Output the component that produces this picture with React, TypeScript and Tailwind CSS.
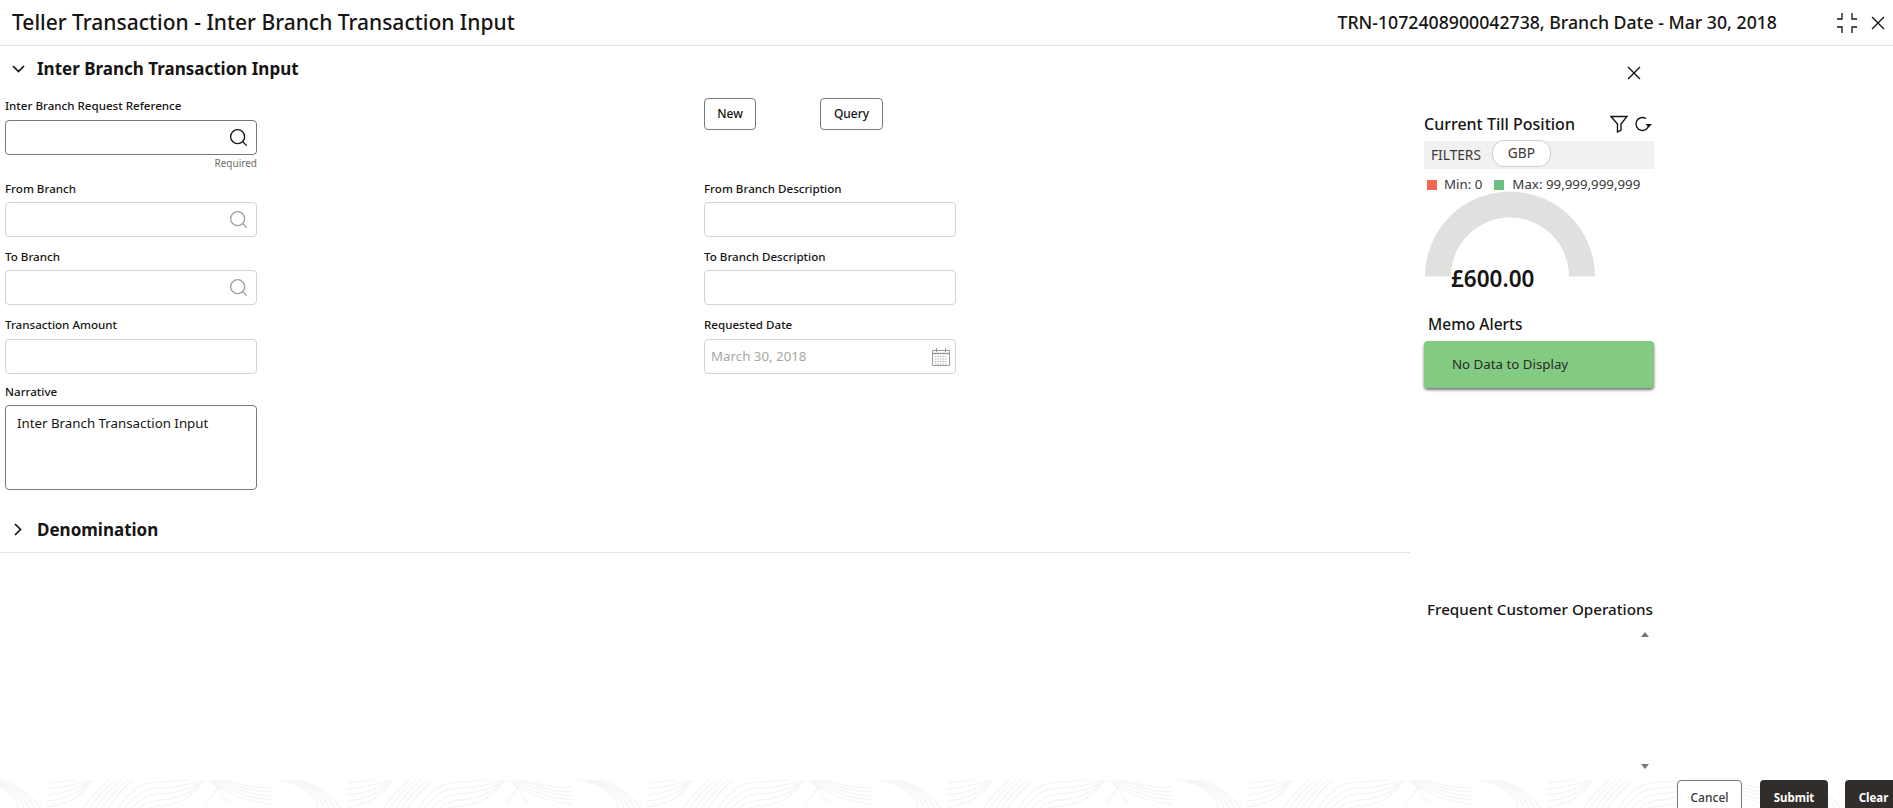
import { useState } from 'react'
import { Search } from 'lucide-react'

const font = "font-['Noto_Sans',sans-serif]"

function Label({ children }: { children: string }) {
  return <label className="block h-[18px] text-[11.6px] font-medium leading-[18px] text-[#161513]">{children}</label>
}

function TextBox({ icon, strong, value }: { icon?: boolean; strong?: boolean; value?: string }) {
  return (
    <div
      className={`mt-1 flex h-[35px] w-[252px] items-center rounded-[4px] border bg-white pr-1.5 ${
        strong ? 'border-[#7a7875]' : 'border-[#d4d3d2]'
      }`}
    >
      <input
        readOnly
        value={value ?? ''}
        className="h-full min-w-0 flex-1 bg-transparent pl-1.5 text-[13.3px] text-[#a8a6a3] outline-none"
      />
      {icon && <Search size={21} strokeWidth={1.5} className={`mr-[1px] ${strong ? 'text-[#161513]' : 'text-[#a3a19e]'}`} />}
    </div>
  )
}

function CloseIcon({ size = 14 }: { size?: number }) {
  return (
    <svg width={size} height={size} viewBox="0 0 14 14" fill="none" stroke="#161513" strokeWidth="1.4">
      <path d="M1 1l12 12M13 1L1 13" />
    </svg>
  )
}

function CompressIcon() {
  return (
    <svg width="20" height="20" viewBox="0 0 20 20" fill="none" stroke="#161513" strokeWidth="1.3">
      <path d="M0 6h5V0M15 0v6h5M0 14h5v6M15 20v-6h5" />
    </svg>
  )
}

function CalendarIcon() {
  return (
    <svg width="20" height="20" viewBox="0 0 20 20" fill="none" stroke="#9b9996">
      <path d="M1.5 3.5h17v15h-17z" />
      <path d="M1.5 6.5h17" strokeWidth="1.5" />
      <path d="M5.5 1v4M14.5 1v4" />
      <path d="M4 9.5h12M4 12h12M4 14.5h12M4 17h12" strokeDasharray="1.5 1" stroke="#b5b3b0" />
    </svg>
  )
}

// footer wave texture, one tile is 300px wide
function FooterPattern() {
  const offsets = [0, 6, 12, 18, 24]
  return (
    <svg className="absolute inset-0 h-full w-full" aria-hidden>
      <defs>
        <pattern id="waves" width="300" height="28" patternUnits="userSpaceOnUse">
          <g fill="none" stroke="#f5f5f4" strokeWidth="1.3">
            {offsets.map((o) => (
              <path key={`a${o}`} d={`M${-30 + o} -2 Q${18 + o * 0.3} 6 ${18 + o} 30`} />
            ))}
            {offsets.map((o) => (
              <path key={`a2${o}`} d={`M${270 + o} -2 Q${318 + o * 0.3} 6 ${318 + o} 30`} />
            ))}
            {offsets.map((o) => (
              <path key={`b${o}`} d={`M47 ${o + 3} Q78 ${o} ${98 - o * 0.2} ${-4 + o * 0.1}`} />
            ))}
            {offsets.map((o) => (
              <path key={`c${o}`} d={`M${82 + o} 30 Q${96 + o} 10 ${112 + o} -2`} />
            ))}
            {offsets.map((o) => (
              <path key={`d${o}`} d={`M${118 + o} 30 Q${132 + o} ${o + 2} 160 ${o + 2}`} />
            ))}
            {offsets.map((o) => (
              <path key={`e${o}`} d={`M160 ${o + 2} Q190 ${o} ${210 - o * 0.2} -2`} />
            ))}
            {offsets.map((o) => (
              <path key={`f${o}`} d={`M${206 + o * 0.5} -2 Q${232 + o} ${20 - o * 0.4} 272 ${24 - o * 0.7}`} />
            ))}
            <path d="M224 -2L206 24M212 -2L228 24" />
          </g>
        </pattern>
      </defs>
      <rect width="100%" height="100%" fill="url(#waves)" />
    </svg>
  )
}

export default function App() {
  const [narrative] = useState('Inter Branch Transaction Input')

  return (
    <div className={`${font} flex h-[808px] w-[1893px] flex-col overflow-hidden bg-white text-[#161513]`}>
      {/* Title bar */}
      <header className="flex h-[46px] shrink-0 items-center border-b border-[#e3e3e2] pl-3 pr-[8px]">
        <h1 className="text-[21px] font-medium leading-none">Teller Transaction - Inter Branch Transaction Input</h1>
        <span className="ml-auto text-[17.7px] font-medium">TRN-1072408900042738, Branch Date - Mar 30, 2018</span>
        <span className="ml-[60px] flex items-center gap-[14px]">
          <CompressIcon />
          <CloseIcon />
        </span>
      </header>

      <div className="flex min-h-0 flex-1">
        {/* Form */}
        <main className="w-[1410px] shrink-0">
          <div className="flex h-[44px] items-center pl-3 pt-[2px]">
            <svg width="13" height="8" viewBox="0 0 13 8" fill="none" stroke="#161513" strokeWidth="1.7">
              <path d="M1 1l5.5 5.5L12 1" />
            </svg>
            <h2 className="ml-[12px] text-[17px] font-bold">Inter Branch Transaction Input</h2>
          </div>

          <div className="mt-[6px] grid grid-cols-[699px_252px] pl-[5px]">
            <div className="h-[84px] pt-[1px]">
              <Label>Inter Branch Request Reference</Label>
              <div className="pt-[1px]">
                <TextBox icon strong />
              </div>
              <p className="w-[252px] text-right text-[10px] leading-[16px] text-[#6f6d6a]">Required</p>
            </div>
            <div className="flex gap-[64px] pt-[2px]">
              <button className="h-[32px] w-[52px] rounded-[4px] border border-[#7a7875] text-[12px] font-medium">New</button>
              <button className="h-[32px] w-[63px] rounded-[4px] border border-[#7a7875] text-[12px] font-medium">Query</button>
            </div>

            <div className="h-[68px]">
              <Label>From Branch</Label>
              <TextBox icon />
            </div>
            <div>
              <Label>From Branch Description</Label>
              <TextBox />
            </div>

            <div className="h-[68px]">
              <Label>To Branch</Label>
              <TextBox icon />
            </div>
            <div>
              <Label>To Branch Description</Label>
              <TextBox />
            </div>

            <div className="h-[67px]">
              <Label>Transaction Amount</Label>
              <div className="pt-[1px]">
                <TextBox />
              </div>
            </div>
            <div>
              <Label>Requested Date</Label>
              <div className="mt-[5px] flex h-[35px] w-[252px] items-center justify-between rounded-[4px] border border-[#d4d3d2] pl-1.5 pr-1">
                <span className="text-[13.3px] text-[#a8a6a3]">March 30, 2018</span>
                <CalendarIcon />
              </div>
            </div>

            <div>
              <Label>Narrative</Label>
              <textarea
                readOnly
                value={narrative}
                className="mt-1 block h-[85px] w-[252px] resize-none rounded-[4px] border border-[#7a7875] px-[11px] py-[8px] text-[13.3px] leading-[18px] outline-none"
              />
            </div>
          </div>

          <div className="mt-[19px] flex h-[44px] items-center border-b border-[#e3e3e2] pb-[2px] pl-[14px]">
            <svg width="8" height="13" viewBox="0 0 8 13" fill="none" stroke="#161513" strokeWidth="1.7">
              <path d="M1 1l5.5 5.5L1 12" />
            </svg>
            <h2 className="ml-[15px] text-[17px] font-bold">Denomination</h2>
          </div>
        </main>

        {/* Right panel */}
        <aside className="w-[483px] shrink-0 pl-[14px]">
          <div className="flex h-[54px] w-[230px] items-center justify-end pr-[13px]">
            <CloseIcon />
          </div>
          <div className="w-[230px]">
            <div className="flex h-[41px] items-center justify-between pt-[7px]">
              <h3 className="text-[16px] font-medium">Current Till Position</h3>
              <span className="flex items-center gap-[6px] pr-[2px]">
                <svg width="18" height="18" viewBox="0 0 18 18" fill="none" stroke="#161513" strokeWidth="1.4">
                  <path d="M1 1.5h16l-6 7.5v6l-3.5 2V9z" />
                </svg>
                <svg width="18" height="16" viewBox="0 0 18 16" fill="none" stroke="#161513" strokeWidth="1.4">
                  <path d="M15 8a6.5 6.5 0 1 1-3-5.5" />
                  <path d="M11.5 8h6.5l-3.2 3.5z" fill="#161513" stroke="none" />
                </svg>
              </span>
            </div>
            <div className="flex h-[28px] items-center bg-[#f1f1f1] pl-[7px] text-[13.7px] text-[#3b3936]">
              <span>FILTERS</span>
              <span className="-mt-[3px] ml-[11px] flex h-[27px] w-[59px] items-center justify-center rounded-[12px] border border-[#cfcecd] bg-white">
                GBP
              </span>
            </div>
            <div className="mt-[7px] flex h-[18px] items-center pl-[3px] text-[13.3px] text-[#3b3936]">
              <span className="h-[10px] w-[10px] bg-[#f0684f]" />
              <span className="ml-[7px]">Min: 0</span>
              <span className="ml-[12px] h-[10px] w-[10px] bg-[#6bc081]" />
              <span className="ml-[8px]">Max: 99,999,999,999</span>
            </div>
            <div className="relative mt-[-3px] h-[122px] pl-[1px]">
              <svg width="170" height="86" viewBox="0 0 170 86">
                <path d="M0 85.5a85 85 0 0 1 170 0h-26a59 59 0 0 0-118 0z" fill="#e0e0df" />
              </svg>
              <span className="absolute left-[27px] top-[73px] text-[22.5px] font-semibold leading-[30px]">£600.00</span>
            </div>
            <h3 className="-mt-[1px] pl-[4px] text-[15.5px] font-medium leading-[24px]">Memo Alerts</h3>
            <div className="mt-[5px] flex h-[47px] items-center rounded-[4px] bg-[#83cb83] pl-[28px] text-[13.3px] text-[#2b2926] shadow-[0_2px_3px_rgba(0,0,0,0.55)]">
              No Data to Display
            </div>
            <h3 className="mt-[209px] whitespace-nowrap pl-[3px] text-[15.2px] font-medium leading-[24px]">Frequent Customer Operations</h3>
            <div className="mt-[11px] flex h-[137px] flex-col items-end justify-between pr-[5px]">
              <span className="h-0 w-0 border-x-[4px] border-b-[5px] border-x-transparent border-b-[#7a7875]" />
              <span className="h-0 w-0 border-x-[4px] border-t-[5px] border-x-transparent border-t-[#7a7875]" />
            </div>
          </div>
        </aside>
      </div>

      {/* Footer */}
      <footer className="relative h-[28px] shrink-0">
        <FooterPattern />
        <div className="relative flex h-full items-start pl-[1677px]">
          <button className="h-[36px] w-[65px] shrink-0 rounded-[4px] border border-[#7a7875] bg-white text-[12px] font-medium text-[#3b3936]">
            Cancel
          </button>
          <button className="ml-[18px] h-[36px] w-[68px] shrink-0 rounded-[4px] bg-[#312d2a] text-[11.5px] font-bold text-white">
            Submit
          </button>
          <button className="ml-[17px] h-[36px] w-[57px] shrink-0 rounded-[4px] bg-[#312d2a] text-[11.5px] font-bold text-white">
            Clear
          </button>
        </div>
      </footer>
    </div>
  )
}
